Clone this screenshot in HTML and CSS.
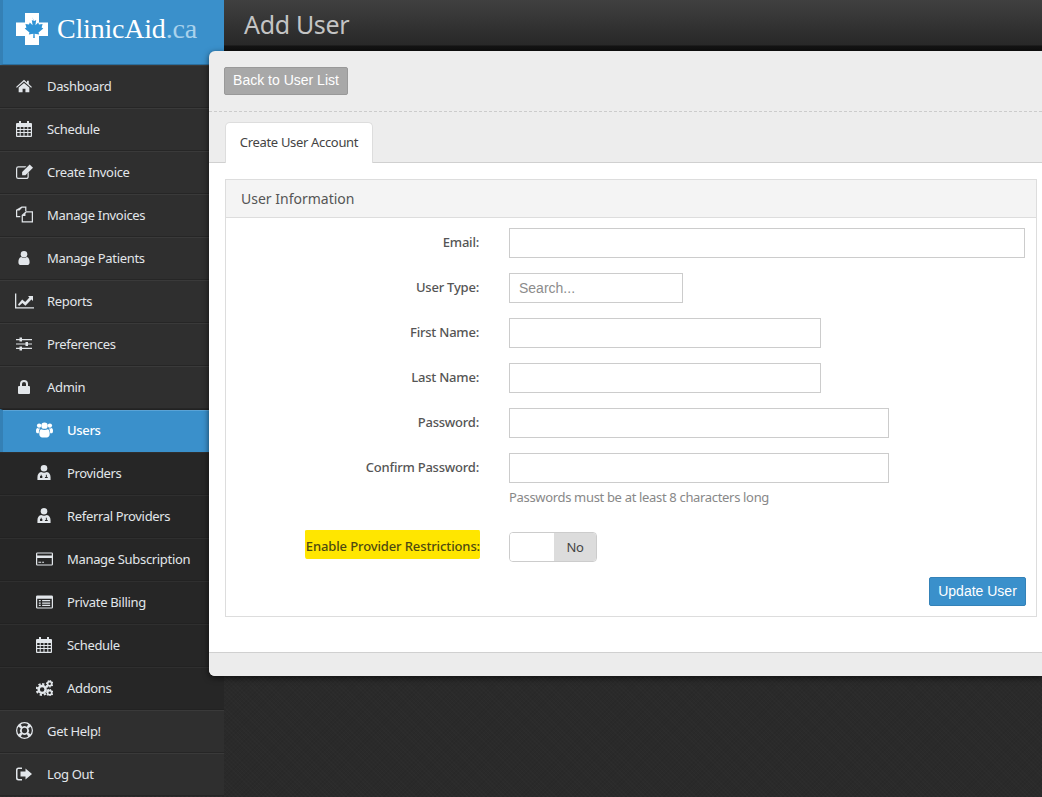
FILE: index.html
```html
<!DOCTYPE html>
<html lang="en">
<head>
    <meta charset="UTF-8">
    <title>Add User - ClinicAid.ca</title>
    <link rel="stylesheet" href="styles.css">
</head>
<body>
    <div class="app">
        <aside class="sidebar">
            <div class="logo">
                <svg class="logo-mark" viewBox="0 0 32 32">
                    <path fill="#fff" d="M9 0h14v9.500h9v13.500H23v9H9v-9H0V9.500h9z"/>
                    <path fill="#2f94d6" d="M16 4l2.200 4 2-1-.8 5.200 2.800-2.600.8 1.900 3.600-.6-1 3.600 1.700.9-4.800 4.100.7 2-4.600-.7.200 4.200h-1.600l.2-4.200-4.600.7.7-2-4.800-4.100 1.700-.9-1-3.600 3.600.6.800-1.900 2.800 2.600-.8-5.200 2 1z"/>
                </svg>
                <span class="logo-text">ClinicAid<span class="logo-tld">.ca</span></span>
            </div>
            <nav>
                <a class="nav-item" href="#">
                    <svg class="icon" viewBox="0 0 18 16"><path d="M9 1l3.400 3V2h2v3.800L18 9l-1 1-8-7-8 7-1-1z"/><path d="M9 4.600l6 5.200V15h-4.400v-4H7.400v4H3V9.800z"/></svg>
                    Dashboard
                </a>
                <a class="nav-item" href="#">
                    <svg class="icon" viewBox="0 0 16 16"><path fill-rule="evenodd" d="M3 0h2v2h6V0h2v2h2a1 1 0 0 1 1 1v12a1 1 0 0 1-1 1H1a1 1 0 0 1-1-1V3a1 1 0 0 1 1-1h2zM1.200 6v2h2.500V6zm3.500 0v2h2.800V6zm3.800 0v2h2.800V6zm3.800 0v2h2.500V6zM1.200 9v2h2.500V9zm3.500 0v2h2.800V9zm3.800 0v2h2.800V9zm3.800 0v2h2.500V9zM1.200 12v2.800h2.500V12zm3.500 0v2.800h2.800V12zm3.800 0v2.800h2.800V12zm3.800 0v2.800h2.500V12z"/></svg>
                    Schedule
                </a>
                <a class="nav-item" href="#">
                    <svg class="icon icon-wide" viewBox="0 0 18 16"><path d="M2.500 2H11l-1.300 1.300H2.500c-.7 0-1.200.5-1.200 1.200v8.500c0 .7.500 1.200 1.200 1.200H11c.7 0 1.200-.5 1.200-1.200V9.500L13.500 8v5c0 1.400-1.100 2.500-2.500 2.500H2.500A2.500 2.500 0 0 1 0 13V4.500A2.500 2.500 0 0 1 2.500 2z"/><path d="M14.500 0L18 3.500 10 11.500H6.500V8z"/></svg>
                    Create Invoice
                </a>
                <a class="nav-item" href="#">
                    <svg class="icon icon-wide icon-ring" viewBox="0 0 18 17"><path d="M6 0h5v5H9.700V1.300H6.500L3.700 4.200H1.300v6h3.200v1.300H0V3.500z"/><path d="M10.500 5H18v12H6V9zm.5 1.300L7.300 9.500v6.200h9.400V6.300z"/><path d="M10 6.500v3.500H6.500z"/></svg>
                    Manage Invoices
                </a>
                <a class="nav-item" href="#">
                    <svg class="icon icon-narrow" viewBox="0 0 12 15"><circle cx="6" cy="3.500" r="3.500"/><path d="M3 6.500c1.800 1.300 4.200 1.300 6 0 2 .4 3 2.500 3 5.500 0 2-1 3-2.500 3h-7C1 15 0 14 0 12c0-3 1-5.100 3-5.500z"/></svg>
                    Manage Patients
                </a>
                <a class="nav-item" href="#">
                    <svg class="icon icon-chart" viewBox="0 0 19 15"><path d="M0 0h1.300v13.700H19V15H0z"/><path d="M3 11l4.200-5 3 2.600L14.400 4 13 2.600h5v5l-1.600-1.600-6 6.300-3-2.700L4 12.500z"/></svg>
                    Reports
                </a>
                <a class="nav-item" href="#">
                    <svg class="icon" viewBox="0 0 16 14"><path d="M0 2h3.500V.500h2.500V2h10v1.300H6v1.200H3.500V3.300H0zM0 6.400h9.500V5h2.500v1.400h4v1.200h-4V9H9.500V7.600H0zM0 10.700h3.500V9.500h2.500v1.200h10V12H6v1.500H3.500V12H0z"/></svg>
                    Preferences
                </a>
                <a class="nav-item" href="#">
                    <svg class="icon icon-narrow" viewBox="0 0 12 14"><path d="M2 6V4a4 4 0 0 1 8 0v2h1a1 1 0 0 1 1 1v6a1 1 0 0 1-1 1H1a1 1 0 0 1-1-1V7a1 1 0 0 1 1-1zm2 0h4V4a2 2 0 0 0-4 0z"/></svg>
                    Admin
                </a>
                <a class="nav-item sub active" href="#">
                    <svg class="icon icon-wide" viewBox="0 0 18 16"><circle cx="3.300" cy="3.300" r="2.300"/><circle cx="14.700" cy="3.300" r="2.300"/><circle cx="9" cy="3.400" r="3.400"/><path d="M5.500 7.300c2 1 5 1 7 0 1.500.5 2 2.500 2 5 0 2.300-1.500 3.700-3 3.700h-5c-1.500 0-3-1.400-3-3.700 0-2.500.5-4.500 2-5z"/><path d="M0 8.500C0 7 .8 6.300 1.600 6c.9.600 2 .6 2.700.4-.7 1-1.300 2.700-1.300 5H1.200C.4 11.400 0 10.500 0 8.500zM18 8.500C18 7 17.200 6.300 16.400 6c-.9.600-2 .6-2.700.4.700 1 1.300 2.700 1.300 5h1.800c.8 0 1.200-.9 1.200-2.900z"/></svg>
                    Users
                </a>
                <a class="nav-item sub" href="#">
                    <svg class="icon icon-small" viewBox="0 0 14 16"><circle cx="7" cy="3.500" r="3.500"/><path fill-rule="evenodd" d="M4 7.500c2 1 4 1 6 0 2.500.5 4 2.500 4 5.500v3H0v-3c0-3 1.500-5 4-5.500zM3.500 10.500v1.300H2.800v2h2.400v-2h-.7v-1.300zm5.500 0v2.400H8v1h3v-1h-1v-2.400z"/></svg>
                    Providers
                </a>
                <a class="nav-item sub" href="#">
                    <svg class="icon icon-small" viewBox="0 0 14 16"><circle cx="7" cy="3.500" r="3.500"/><path fill-rule="evenodd" d="M4 7.500c2 1 4 1 6 0 2.500.5 4 2.500 4 5.500v3H0v-3c0-3 1.500-5 4-5.500zM3.500 10.500v1.300H2.800v2h2.400v-2h-.7v-1.300zm5.500 0v2.400H8v1h3v-1h-1v-2.400z"/></svg>
                    Referral Providers
                </a>
                <a class="nav-item sub" href="#">
                    <svg class="icon icon-wide" viewBox="0 0 18 14"><path fill-rule="evenodd" d="M1.500 0h15A1.500 1.500 0 0 1 18 1.500v11a1.500 1.500 0 0 1-1.500 1.500h-15A1.500 1.500 0 0 1 0 12.500v-11A1.500 1.500 0 0 1 1.500 0zm-.2 1.300v1.900h15.400V1.300zm0 4.700v6.700h15.400V6zM2.500 10h3v1h-3zm4 0h2v1h-2z"/></svg>
                    Manage Subscription
                </a>
                <a class="nav-item sub" href="#">
                    <svg class="icon icon-wide" viewBox="0 0 18 14"><path fill-rule="evenodd" d="M1.500 0h15A1.500 1.500 0 0 1 18 1.500v11a1.500 1.500 0 0 1-1.500 1.500h-15A1.500 1.500 0 0 1 0 12.500v-11A1.500 1.500 0 0 1 1.500 0zm-.2 3.500v9.200h15.400V3.500zM3 5h2v1.300H3zm3.500 0H15v1.300H6.500zM3 7.500h2v1.300H3zm3.500 0H15v1.300H6.500zM3 10h2v1.300H3zm3.500 0H15v1.300H6.500z"/></svg>
                    Private Billing
                </a>
                <a class="nav-item sub" href="#">
                    <svg class="icon" viewBox="0 0 16 16"><path fill-rule="evenodd" d="M3 0h2v2h6V0h2v2h2a1 1 0 0 1 1 1v12a1 1 0 0 1-1 1H1a1 1 0 0 1-1-1V3a1 1 0 0 1 1-1h2zM1.200 6v2h2.500V6zm3.500 0v2h2.800V6zm3.800 0v2h2.800V6zm3.800 0v2h2.500V6zM1.200 9v2h2.500V9zm3.500 0v2h2.800V9zm3.800 0v2h2.800V9zm3.800 0v2h2.500V9zM1.200 12v2.800h2.500V12zm3.500 0v2.800h2.800V12zm3.800 0v2.800h2.800V12zm3.800 0v2.800h2.500V12z"/></svg>
                    Schedule
                </a>
                <a class="nav-item sub" href="#">
                    <svg class="icon icon-wide" viewBox="0 0 18 17"><g fill="none" stroke="currentColor"><circle cx="6.500" cy="10" r="3.700" stroke-width="2.600"/><circle cx="14.500" cy="4" r="2.200" stroke-width="1.800"/><circle cx="14.500" cy="13.500" r="2.200" stroke-width="1.800"/><path stroke-width="2.200" stroke-dasharray="2.400 2.100" d="M6.500 4.200a5.800 5.800 0 1 1 0 11.600a5.800 5.800 0 1 1 0-11.600z"/><path stroke-width="1.300" stroke-dasharray="1.500 1.500" d="M14.500.700a3.300 3.300 0 1 1 0 6.600a3.300 3.300 0 1 1 0-6.600zM14.500 10.200a3.300 3.300 0 1 1 0 6.600a3.300 3.300 0 1 1 0-6.600z"/></g></svg>
                    Addons
                </a>
                <a class="nav-item" href="#">
                    <svg class="icon icon-wide icon-ring" viewBox="0 0 16 16"><path fill-rule="evenodd" d="M8 0a8 8 0 1 1 0 16A8 8 0 0 1 8 0zM4.500 2.300l1.300 2.100a4 4 0 0 1 4.400 0l1.300-2.100a6.500 6.500 0 0 0-7 0zM2.300 4.500a6.500 6.500 0 0 0 0 7l2.100-1.300a4 4 0 0 1 0-4.400zm11.400 0l-2.100 1.300a4 4 0 0 1 0 4.400l2.100 1.300a6.500 6.500 0 0 0 0-7zM5.800 11.600l-1.300 2.100a6.500 6.500 0 0 0 7 0l-1.300-2.100a4 4 0 0 1-4.400 0zM8 5.500a2.500 2.500 0 1 0 0 5 2.500 2.500 0 0 0 0-5z"/></svg>
                    Get Help!
                </a>
                <a class="nav-item" href="#">
                    <svg class="icon" viewBox="0 0 16 13"><path d="M2.500 0H6v1.500H2.700c-.7 0-1.200.5-1.200 1.200v7.600c0 .7.500 1.200 1.200 1.200H6V13H2.500A2.500 2.500 0 0 1 0 10.500v-8A2.500 2.500 0 0 1 2.500 0z"/><path d="M9.500 1L16 6.500 9.500 12V9H4.500V4h5z"/></svg>
                    Log Out
                </a>
            </nav>
        </aside>

        <main class="content">
            <h1 class="page-title">Add User</h1>
            <div class="panel">
                <div class="toolbar">
                    <button class="btn btn-grey">Back to User List</button>
                </div>
                <div class="tabs">
                    <div class="tab">Create User Account</div>
                </div>
                <div class="panel-body">
                    <section class="box">
                        <h2 class="box-title">User Information</h2>
                        <form class="user-form">
                            <label class="form-label">Email:</label>
                            <input class="field" type="text">

                            <label class="form-label">User Type:</label>
                            <input class="field field-xs" type="text" placeholder="Search...">

                            <label class="form-label">First Name:</label>
                            <input class="field field-sm" type="text">

                            <label class="form-label">Last Name:</label>
                            <input class="field field-sm" type="text">

                            <label class="form-label">Password:</label>
                            <input class="field field-md" type="text">

                            <label class="form-label">Confirm Password:</label>
                            <div>
                                <input class="field field-md" type="text">
                                <p class="help">Passwords must be at least 8 characters long</p>
                            </div>

                            <label class="form-label restrictions"><span class="marker">Enable Provider Restrictions:</span></label>
                            <div class="toggle">
                                <span class="toggle-off"></span>
                                <span class="toggle-label">No</span>
                            </div>
                        </form>
                        <div class="box-actions">
                            <button class="btn btn-blue">Update User</button>
                        </div>
                    </section>
                </div>
                <div class="panel-footer"></div>
            </div>
        </main>
    </div>
</body>
</html>
```

FILE: styles.css
```css
html, body {
    height: 100%;
}

body {
    margin: 0;
    overflow: hidden;
    font-family: "Noto Sans", sans-serif;
    font-size: 13px;
    letter-spacing: -0.33px;
    background-color: #2a2a2a;
    background-image:
        repeating-linear-gradient(45deg, rgba(255, 255, 255, 0.012) 0 1px, transparent 1px 3px),
        repeating-linear-gradient(-45deg, rgba(0, 0, 0, 0.05) 0 1px, transparent 1px 3px);
}

.app {
    display: flex;
    height: 797px;
}

/* sidebar */
.sidebar {
    width: 224px;
    flex: none;
}

.logo {
    height: 65px;
    box-sizing: border-box;
    display: flex;
    align-items: center;
    gap: 9px;
    padding: 0 0 6px 13px;
    background: #3a90cb;
    border-left: 3px solid #3480b5;
    border-bottom: 1px solid #2b6f9e;
}

.logo-mark {
    width: 32px;
    height: 32px;
    flex: none;
}

.logo-text {
    font-family: "Liberation Serif", serif;
    font-size: 28px;
    letter-spacing: -0.2px;
    color: #fff;
}

.logo-tld {
    color: #a9d2ec;
}

.nav-item {
    height: 43px;
    box-sizing: border-box;
    display: flex;
    align-items: center;
    padding: 0 0 2px 15px;
    color: #e2e6ea;
    text-decoration: none;
    background: #2f2f2f;
    border-top: 1px solid #3a3a3a;
    border-bottom: 1px solid #262626;
}

.nav-item.sub {
    padding-left: 35px;
    background: #262626;
    border-top: 1px solid #2f2f2f;
    border-bottom: 1px solid #222;
}

.nav-item.active {
    background: #3a90cb;
    color: #fff;
    font-weight: 500;
    border-left: 3px solid #3480b5;
    padding-left: 32px;
    border-top: 1px solid #222;
    border-bottom: none;
    box-shadow: inset 0 1px #5aa3d6;
}

.icon {
    width: 16px;
    height: 16px;
    flex: none;
    margin: 0 15px 0 1px;
    fill: currentColor;
}

.icon-chart {
    width: 19px;
    margin: 0 13px 0 0;
}

.icon-wide {
    width: 17px;
    margin: 0 14px 0 1px;
}

.icon-ring {
    height: 17px;
}

.icon-narrow {
    height: 14px;
}

.icon-small {
    height: 15px;
}

/* main area */
.content {
    flex: 1;
    min-width: 0;
}

.page-title {
    height: 51px;
    box-sizing: border-box;
    margin: 0;
    padding: 6px 0 0 20px;
    font-size: 25px;
    font-weight: 400;
    line-height: 36px;
    color: #c4c4c4;
    background: linear-gradient(#404040, #282828 45px, #141414 46px, #0f0f0f);
}

.panel {
    margin-left: -15px;
    position: relative;
    background: #ededed;
    border-radius: 6px 0 0 6px;
    box-shadow: 0 2px 6px rgba(0, 0, 0, 0.6);
}

.toolbar {
    height: 61px;
    box-sizing: border-box;
    padding: 16px 0 0 15px;
    border-bottom: 1px dashed #ccc;
}

.btn {
    font-family: "Liberation Sans", sans-serif;
    font-size: 14px;
    letter-spacing: 0;
    color: #fff;
    border-radius: 2px;
    cursor: pointer;
}

.btn-grey {
    width: 124px;
    height: 28px;
    padding: 0 0 2px;
    background: #a8a8a8;
    border: 1px solid #999;
}

.btn-blue {
    width: 97px;
    height: 29px;
    padding: 0 0 2px;
    background: #3a90cb;
    border: 1px solid #3482b8;
}

.tabs {
    height: 51px;
    box-sizing: border-box;
    padding: 10px 0 0 16px;
    border-bottom: 1px solid #d0d0d0;
}

.tab {
    width: 148px;
    height: 41px;
    box-sizing: border-box;
    text-align: center;
    line-height: 39px;
    color: #444;
    background: #fff;
    border: 1px solid #ddd;
    border-bottom: none;
    border-radius: 5px 5px 0 0;
}

.panel-body {
    height: 489px;
    box-sizing: border-box;
    padding: 16px 5px 0 16px;
    background: #fff;
}

.box {
    height: 438px;
    box-sizing: border-box;
    border: 1px solid #ddd;
}

.box-title {
    height: 38px;
    box-sizing: border-box;
    margin: 0;
    padding-left: 15px;
    font-size: 14px;
    font-weight: 400;
    letter-spacing: 0;
    line-height: 37px;
    color: #555;
    background: #f4f4f4;
    border-bottom: 1px solid #ddd;
}

.user-form {
    display: grid;
    grid-template-columns: 253px 1fr;
    column-gap: 30px;
    row-gap: 15px;
    align-items: start;
    padding: 10px 11px 0 0;
}

.form-label {
    text-align: right;
    font-weight: 500;
    letter-spacing: -0.22px;
    line-height: 28px;
    color: #555;
}

.field {
    display: block;
    width: 100%;
    height: 30px;
    box-sizing: border-box;
    padding: 0 9px;
    font-family: "Liberation Sans", sans-serif;
    font-size: 14px;
    letter-spacing: 0;
    background: #fff;
    border: 1px solid #ccc;
}

.field::placeholder {
    color: #8c8c8c;
}

.field-xs {
    width: 174px;
}

.field-sm {
    width: 312px;
}

.field-md {
    width: 380px;
}

.help {
    margin: 6px 0 0;
    line-height: 16px;
    color: #888;
}

.restrictions {
    display: flex;
    justify-content: flex-end;
    margin-top: 10px;
}

/* the hand-drawn highlight over the label */
.marker {
    height: 25px;
    padding: 4px 0 0 1px;
    margin-right: -1px;
    line-height: 25px;
    letter-spacing: -0.12px;
    background: #ffe600;
    border-radius: 2px 1px 3px 2px / 1px 2px 2px 3px;
    color: #4e4a10;
}

.toggle {
    display: flex;
    width: 88px;
    height: 30px;
    box-sizing: border-box;
    margin-top: 12px;
    border: 1px solid #ccc;
    border-radius: 4px;
    overflow: hidden;
}

.toggle-off {
    width: 44px;
    background: #fff;
}

.toggle-label {
    flex: 1;
    text-align: center;
    line-height: 28px;
    color: #444;
    background: #dcdcdc;
}

.box-actions {
    display: flex;
    justify-content: flex-end;
    padding: 15px 10px 0 0;
}

.panel-footer {
    height: 24px;
    background: #ececec;
    border-top: 1px solid #d0d0d0;
    box-sizing: border-box;
    border-radius: 0 0 0 6px;
}
```
